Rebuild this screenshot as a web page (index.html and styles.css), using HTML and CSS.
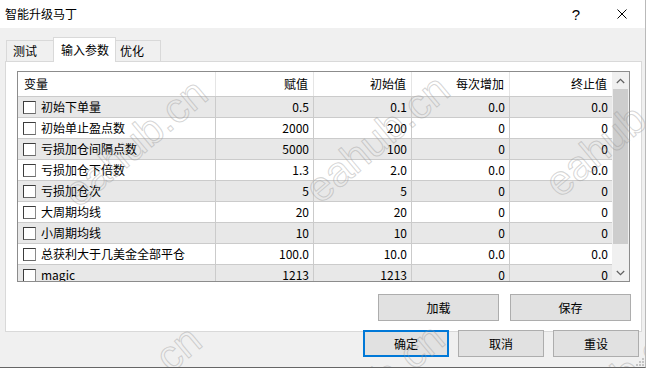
FILE: index.html
```html
<!DOCTYPE html>
<html lang="zh-CN">
<head>
<meta charset="utf-8">
<title>智能升级马丁</title>
<link rel="stylesheet" href="styles.css">
</head>
<body>
<div class="window">
  <div class="titlebar">
    <span class="title">智能升级马丁</span>
    <span class="tb-btn help">?</span>
    <span class="tb-btn close"><svg width="10" height="10" viewBox="0 0 10 10"><path d="M0.5 0.5 L9.5 9.5 M9.5 0.5 L0.5 9.5" stroke="#000" stroke-width="1" fill="none"/></svg></span>
  </div>
  <div class="content">
    <div class="tabs">
      <div class="tab tab-test">测试</div>
      <div class="tab tab-input active">输入参数</div>
      <div class="tab tab-opt">优化</div>
    </div>
    <div class="panel">
      <div class="grid">
        <div class="table">
          <div class="row head">
            <div class="cell name">变量</div>
            <div class="cell num">赋值</div>
            <div class="cell num">初始值</div>
            <div class="cell num">每次增加</div>
            <div class="cell num last">终止值</div>
          </div>
          <div class="row odd">
            <div class="cell name"><span class="cb"></span>初始下单量</div>
            <div class="cell num">0.5</div><div class="cell num">0.1</div><div class="cell num">0.0</div><div class="cell num last">0.0</div>
          </div>
          <div class="row">
            <div class="cell name"><span class="cb"></span>初始单止盈点数</div>
            <div class="cell num">2000</div><div class="cell num">200</div><div class="cell num">0</div><div class="cell num last">0</div>
          </div>
          <div class="row odd">
            <div class="cell name"><span class="cb"></span>亏损加仓间隔点数</div>
            <div class="cell num">5000</div><div class="cell num">100</div><div class="cell num">0</div><div class="cell num last">0</div>
          </div>
          <div class="row">
            <div class="cell name"><span class="cb"></span>亏损加仓下倍数</div>
            <div class="cell num">1.3</div><div class="cell num">2.0</div><div class="cell num">0.0</div><div class="cell num last">0.0</div>
          </div>
          <div class="row odd">
            <div class="cell name"><span class="cb"></span>亏损加仓次</div>
            <div class="cell num">5</div><div class="cell num">5</div><div class="cell num">0</div><div class="cell num last">0</div>
          </div>
          <div class="row">
            <div class="cell name"><span class="cb"></span>大周期均线</div>
            <div class="cell num">20</div><div class="cell num">20</div><div class="cell num">0</div><div class="cell num last">0</div>
          </div>
          <div class="row odd">
            <div class="cell name"><span class="cb"></span>小周期均线</div>
            <div class="cell num">10</div><div class="cell num">10</div><div class="cell num">0</div><div class="cell num last">0</div>
          </div>
          <div class="row">
            <div class="cell name"><span class="cb"></span>总获利大于几美金全部平仓</div>
            <div class="cell num">100.0</div><div class="cell num">10.0</div><div class="cell num">0.0</div><div class="cell num last">0.0</div>
          </div>
          <div class="row odd">
            <div class="cell name"><span class="cb"></span>magic</div>
            <div class="cell num">1213</div><div class="cell num">1213</div><div class="cell num">0</div><div class="cell num last">0</div>
          </div>
        </div>
        <div class="scrollbar">
          <div class="sb-btn"><svg width="9" height="6" viewBox="0 0 9 6"><path d="M0.8 5 L4.5 1.3 L8.2 5" stroke="#606060" stroke-width="1.2" fill="none"/></svg></div>
          <div class="sb-track"><div class="sb-thumb"></div></div>
          <div class="sb-btn"><svg width="9" height="6" viewBox="0 0 9 6"><path d="M0.8 1 L4.5 4.7 L8.2 1" stroke="#606060" stroke-width="1.2" fill="none"/></svg></div>
        </div>
      </div>
      <div class="panel-actions">
        <button class="btn wide">加载</button>
        <button class="btn wide">保存</button>
      </div>
    </div>
    <div class="dialog-actions">
      <button class="btn narrow default">确定</button>
      <button class="btn narrow">取消</button>
      <button class="btn narrow">重设</button>
    </div>
  </div>
  <svg class="grip" width="9" height="9" viewBox="0 0 9 9">
    <rect x="7" y="1" width="2" height="2" fill="#c4c4c4"/>
    <rect x="4" y="4" width="2" height="2" fill="#c4c4c4"/>
    <rect x="7" y="4" width="2" height="2" fill="#c4c4c4"/>
    <rect x="1" y="7" width="2" height="2" fill="#c4c4c4"/>
    <rect x="4" y="7" width="2" height="2" fill="#c4c4c4"/>
    <rect x="7" y="7" width="2" height="2" fill="#c4c4c4"/>
  </svg>
  <div class="watermarks" aria-hidden="true">
    <span class="wm wm1">eahub.cn</span>
    <span class="wm wm2">eahub.cn</span>
    <span class="wm wm3">eahub.cn</span>
    <span class="wm wm4">eahub.cn</span>
    <span class="wm wm5">eahub.cn</span>
    <span class="wm wm6">eahub.cn</span>
  </div>
</div>
</body>
</html>
```
FILE: styles.css
```css
* { box-sizing: border-box; }
html, body { margin: 0; padding: 0; }
body {
  background: #fff;
  font-family: "Noto Sans CJK SC", "Noto Sans", sans-serif;
  font-size: 12px;
  color: #000;
}
.window {
  position: relative;
  width: 646px;
  height: 368px;
  background: #f0f0f0;
  border-right: 1px solid #b9b9b9;
  border-bottom: 1px solid #666;
  display: flex;
  flex-direction: column;
  overflow: hidden;
}
.titlebar {
  height: 28px;
  background: #fff;
  display: flex;
  align-items: center;
}
.title {
  flex: 1;
  padding-left: 5px;
  line-height: 16px;
}
.tb-btn {
  width: 46px;
  height: 28px;
  display: flex;
  align-items: center;
  justify-content: center;
}
.help {
  font-family: "Liberation Sans", sans-serif;
  font-size: 15px;
}
.content {
  flex: 1;
  padding: 9px 0 0 5px;
  display: flex;
  flex-direction: column;
}
.tabs {
  display: flex;
  align-items: flex-end;
  height: 24px;
  padding-left: 1px;
}
.tab {
  height: 21px;
  border: 1px solid #d9d9d9;
  border-bottom: none;
  background: #f0f0f0;
  display: flex;
  align-items: center;
  line-height: 16px;
}
.tab-test { width: 47px; padding-left: 6px; border-right: none; }
.tab-input {
  width: 63px;
  height: 25px;
  padding-left: 7px;
  margin-bottom: -1px;
  background: #fff;
  position: relative;
  z-index: 1;
}
.tab-opt { width: 45px; padding-left: 4px; border-left: none; }
.panel {
  width: 637px;
  border: 1px solid #d9d9d9;
  background: #fff;
  padding: 9px 10px 10px 11px;
}
.grid {
  width: 613px;
  height: 211px;
  border: 1px solid #8c8c8c;
  display: flex;
  background: #fff;
}
.table {
  width: 594px;
  overflow: hidden;
}
.row {
  display: grid;
  grid-template-columns: 198px 98px 98px 98px 102px;
  height: 21px;
  border-bottom: 1px solid #cbcbcb;
}
.row.odd { background: #e8e8e8; }
.row.head {
  height: 25px;
  background: #fff;
  border-bottom: 1px solid #cbcbcb;
}
.cell {
  display: flex;
  align-items: center;
  border-right: 1px solid #cbcbcb;
  white-space: nowrap;
  line-height: 16px;
}
.cell.last { border-right: none; }
.head .cell { border-right-color: #e5e5e5; }
.cell.name { padding-left: 5px; }
.head .cell.name { padding-left: 6px; }
.cell.num { justify-content: flex-end; padding-right: 4px; }
.head .cell.num { padding-right: 5px; }
.cb {
  width: 13px;
  height: 13px;
  background: #fff;
  border: 1px solid;
  border-color: #3c3c3c #8a8a8a #6a6a6a #3c3c3c;
  margin-right: 5px;
  flex: none;
}
.scrollbar {
  width: 17px;
  display: flex;
  flex-direction: column;
  background: #f0f0f0;
}
.sb-btn {
  height: 17px;
  display: flex;
  align-items: center;
  justify-content: center;
}
.sb-track { flex: 1; }
.sb-thumb {
  height: 155px;
  margin: 0 1px;
  background: #cdcdcd;
}
.panel-actions {
  display: flex;
  justify-content: flex-end;
  gap: 11px;
  margin-top: 12px;
}
.btn {
  height: 27px;
  background: #e1e1e1;
  border: 1px solid #adadad;
  font-family: "Noto Sans CJK SC", "Noto Sans", sans-serif;
  font-size: 12px;
  color: #000;
  padding: 0;
  display: flex;
  align-items: center;
  justify-content: center;
  line-height: 16px;
}
.btn.wide { width: 121px; }
.btn.narrow { width: 86px; }
.btn.default { border: 2px solid #0078d7; }
.dialog-actions {
  position: relative;
  display: flex;
  justify-content: flex-end;
  gap: 9px;
  padding-right: 6px;
  margin-top: -2px;
}
.grip {
  position: absolute;
  right: 1px;
  bottom: 1px;
}
.watermarks {
  position: absolute;
  inset: 0;
  pointer-events: none;
  z-index: 5;
}
.wm {
  position: absolute;
  font-family: "Liberation Sans", sans-serif;
  font-size: 42px;
  line-height: 42px;
  white-space: nowrap;
  color: transparent;
  -webkit-text-stroke: 1px rgba(150, 150, 150, 0.4);
  transform: rotate(-40deg);
  transform-origin: 0 35px;
}
.wm1 { left: 78px; top: 174px; }
.wm2 { left: 320px; top: 170px; }
.wm3 { left: 560px; top: 164px; }
.wm4 { left: 72px; top: 421px; }
.wm5 { left: 315px; top: 419px; }
.wm6 { left: 555px; top: 416px; }
```
